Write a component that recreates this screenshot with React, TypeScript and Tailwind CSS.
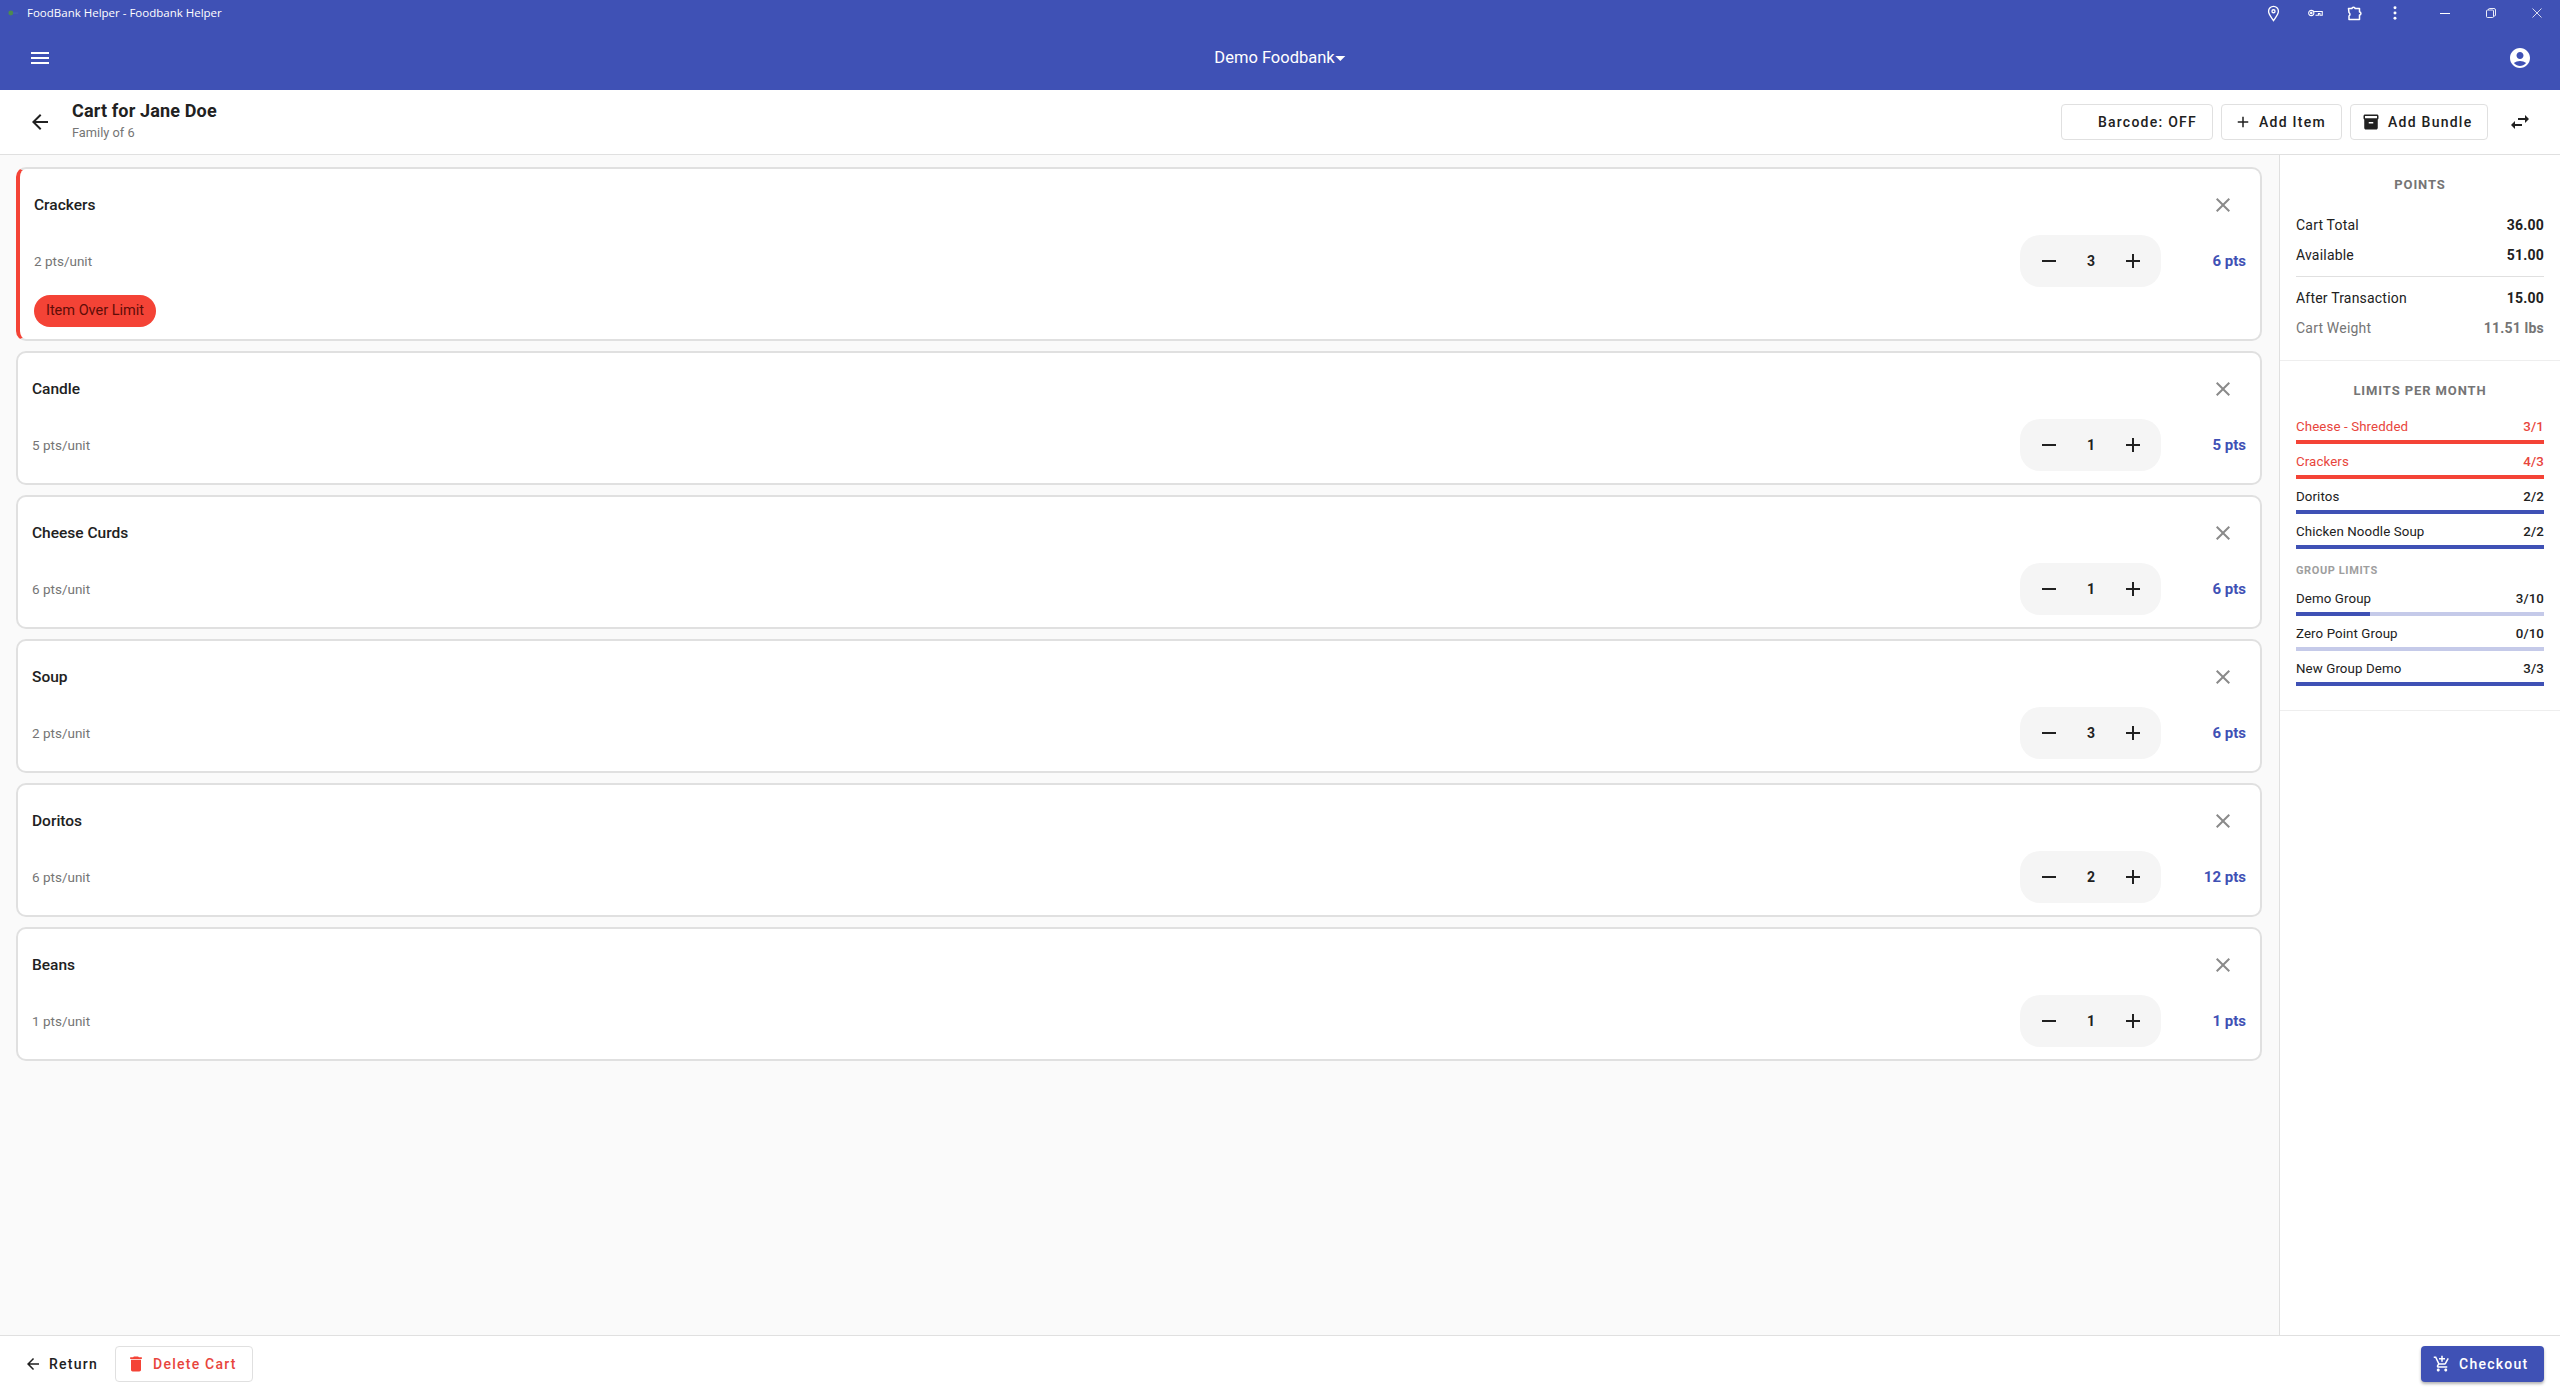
import type { ReactNode } from "react";

interface CartItem {
  name: string;
  perUnit: number;
  qty: number;
  pts: number;
  over?: boolean;
}

interface Limit {
  name: string;
  used: number;
  max: number;
}

const items: CartItem[] = [
  { name: "Crackers", perUnit: 2, qty: 3, pts: 6, over: true },
  { name: "Candle", perUnit: 5, qty: 1, pts: 5 },
  { name: "Cheese Curds", perUnit: 6, qty: 1, pts: 6 },
  { name: "Soup", perUnit: 2, qty: 3, pts: 6 },
  { name: "Doritos", perUnit: 6, qty: 2, pts: 12 },
  { name: "Beans", perUnit: 1, qty: 1, pts: 1 },
];

const itemLimits: Limit[] = [
  { name: "Cheese - Shredded", used: 3, max: 1 },
  { name: "Crackers", used: 4, max: 3 },
  { name: "Doritos", used: 2, max: 2 },
  { name: "Chicken Noodle Soup", used: 2, max: 2 },
];

const groupLimits: Limit[] = [
  { name: "Demo Group", used: 3, max: 10 },
  { name: "Zero Point Group", used: 0, max: 10 },
  { name: "New Group Demo", used: 3, max: 3 },
];

const paths = {
  menu: "M3 18h18v-2H3v2zm0-5h18v-2H3v2zm0-7v2h18V6H3z",
  back: "M20 11H7.83l5.59-5.59L12 4l-8 8 8 8 1.41-1.41L7.83 13H20v-2z",
  close: "M19 6.41 17.59 5 12 10.59 6.41 5 5 6.41 10.59 12 5 17.59 6.41 19 12 13.41 17.59 19 19 17.59 13.41 12z",
  add: "M19 13h-6v6h-2v-6H5v-2h6V5h2v6h6v2z",
  remove: "M19 13H5v-2h14v2z",
  bundle: "M20 2H4c-1 0-2 .9-2 2v3.01c0 .72.43 1.34 1 1.69V20c0 1.1 1.1 2 2 2h14c.9 0 2-.9 2-2V8.7c.57-.35 1-.97 1-1.69V4c0-1.1-1-2-2-2zm-5 12H9v-2h6v2zm5-7H4V4l16-.02V7z",
  swap: "M6.99 11 3 15l3.99 4v-3H14v-2H6.99v-3zM21 9l-3.99-4v3H10v2h7.01v3L21 9z",
  account: "M12 2C6.48 2 2 6.48 2 12s4.48 10 10 10 10-4.48 10-10S17.52 2 12 2zm0 4c1.93 0 3.5 1.57 3.5 3.5S13.93 13 12 13s-3.5-1.57-3.5-3.5S10.07 6 12 6zm0 14c-2.03 0-4.43-.82-6.14-2.88C7.55 15.8 9.68 15 12 15s4.45.8 6.14 2.12C16.43 19.18 14.03 20 12 20z",
  trash: "M6 19c0 1.1.9 2 2 2h8c1.1 0 2-.9 2-2V7H6v12zM19 4h-3.5l-1-1h-5l-1 1H5v2h14V4z",
  cart: "M11 9h2V6h3V4h-3V1h-2v3H8v2h3v3zm-4 9c-1.1 0-1.99.9-1.99 2S5.9 22 7 22s2-.9 2-2-.9-2-2-2zm10 0c-1.1 0-1.99.9-1.99 2s.89 2 1.99 2 2-.9 2-2-.9-2-2-2zm-9.83-3.25.03-.12.9-1.63h7.45c.75 0 1.41-.41 1.75-1.03l3.86-7.01L19.42 4h-.01l-1.1 2-2.76 5H8.53l-.13-.27L6.16 6l-.95-2-.94-2H1v2h2l3.6 7.59-1.35 2.45c-.16.28-.25.61-.25.96 0 1.1.9 2 2 2h12v-2H7.42c-.13 0-.25-.11-.25-.25z",
};

function Icon({ d, className }: { d: string; className: string }) {
  return (
    <svg viewBox="0 0 24 24" fill="currentColor" className={className}>
      <path d={d} />
    </svg>
  );
}

function TitleBar() {
  return (
    <div className="flex h-[26px] items-center text-white">
      <svg viewBox="0 0 16 16" className="ml-[6px] h-[14px] w-[14px]">
        <circle cx="5.500" cy="8" r="2.800" fill="#4d8a50" />
        <path d="M8 7.500h6v1.200H8z" fill="#4a63b8" />
      </svg>
      <span className="ml-[7px] text-[11.5px] [font-family:'Open_Sans',sans-serif]">FoodBank Helper - Foodbank Helper</span>
      <div className="ml-auto flex items-center">
        <svg viewBox="0 0 14 19" fill="none" stroke="currentColor" strokeWidth="1.5" className="mr-[28px] h-[17px] w-[13px]">
          <path d="M7 17.500C4 13 1.500 10.300 1.500 7a5.500 5.500 0 0 1 11 0c0 3.300-2.500 6-5.500 10.500z" />
          <circle cx="7" cy="7" r="1.700" />
        </svg>
        <svg viewBox="0 0 16 8" fill="none" stroke="currentColor" strokeWidth="1.1" className="mr-[24px] h-[8px] w-[15px]">
          <circle cx="3.5" cy="4" r="2.8" />
          <path d="M6.5 2.3h8.7v4h-2.5V4.6h-1.6v1.7H8" />
          <circle cx="3.5" cy="4" r="0.8" fill="currentColor" />
        </svg>
        <svg viewBox="0 0 16 15" fill="none" stroke="currentColor" strokeWidth="1.500" className="mr-[30px] h-[15px] w-[16px]">
          <path d="M1.500 2.500H5c0-1.800 3-1.800 3 0h4.500V6c1.900 0 1.900 3 0 3v4.500H2V10c1.300-.6 1.300-2.800 0-3.400z" strokeLinejoin="round" />
        </svg>
        <svg viewBox="0 0 4 16" fill="currentColor" className="mr-[43px] h-[14px] w-[4px]">
          <circle cx="2" cy="2" r="1.7" />
          <circle cx="2" cy="8" r="1.7" />
          <circle cx="2" cy="14" r="1.7" />
        </svg>
        <div className="mr-[36px] h-px w-[10px] bg-white" />
        <svg viewBox="0 0 10 10" fill="none" stroke="currentColor" strokeWidth="0.9" className="mr-[36px] h-[10px] w-[10px]">
          <rect x="0.5" y="2" width="7" height="7.500" rx="1" />
          <path d="M2.500 2V1.500a1 1 0 0 1 1-1h4.500a1.500 1.500 0 0 1 1.500 1.500v5a1 1 0 0 1-1 1H7.500" />
        </svg>
        <svg viewBox="0 0 10 10" fill="none" stroke="currentColor" strokeWidth="0.8" className="mr-[18px] h-[10px] w-[10px]">
          <path d="M0.500 0.500 9.500 9.500M9.500 0.500 0.500 9.500" />
        </svg>
      </div>
    </div>
  );
}

function OutlineButton({ children, className }: { children: ReactNode; className: string }) {
  return (
    <button className={`flex h-[36px] items-center rounded-[4px] border border-[#e0e0e0] bg-white text-[14px] font-medium tracking-[1.25px] ${className}`}>
      {children}
    </button>
  );
}

function CartCard({ item }: { item: CartItem }) {
  return (
    <div
      className={`flex flex-col rounded-[10px] border-2 border-[#e0e0e0] bg-white pr-[14px] ${
        item.over ? "h-[174px] border-l-4 border-l-[#f44336] pl-[14px]" : "h-[134px] pl-[14px]"
      }`}
    >
      <div className="mt-[12px] flex h-12 items-center justify-between">
        <span className="pt-[2px] text-[15.5px] font-medium text-[#212121]">{item.name}</span>
        <Icon d={paths.close} className="mr-[11px] h-[24px] w-[24px] text-[#8a8a8a]" />
      </div>
      <div className="mt-[6px] flex h-[52px] items-center">
        <span className="text-[13.5px] text-[#757575]">{item.perUnit} pts/unit</span>
        <div className="ml-auto flex h-[52px] w-[141px] items-center justify-between rounded-[20px] bg-[#f5f5f5] pr-[16px] pl-[17px]">
          <Icon d={paths.remove} className="h-[24px] w-[24px] text-[#212121]" />
          <span className="text-[14px] font-bold text-[#212121]">{item.qty}</span>
          <Icon d={paths.add} className="h-[24px] w-[24px] text-[#212121]" />
        </div>
        <span className="w-[85px] text-right text-[15px] font-bold text-[#3f51b5]">{item.pts} pts</span>
      </div>
      {item.over && (
        <div className="mt-[8px] flex h-[32px] w-[122px] items-center justify-center rounded-full bg-[#f44336] text-[14.5px] text-[#5f0d08]">
          Item Over Limit
        </div>
      )}
    </div>
  );
}

function SummaryRow({ label, value, muted }: { label: string; value: string; muted?: boolean }) {
  return (
    <div className={`flex h-[30px] items-center justify-between text-[14px] tracking-[0.2px] ${muted ? "text-[#757575]" : "text-[#212121]"}`}>
      <span>{label}</span>
      <span className="font-bold">{value}</span>
    </div>
  );
}

function LimitRow({ limit }: { limit: Limit }) {
  const over = limit.used > limit.max;
  const pct = Math.min(100, (limit.used / limit.max) * 100);
  return (
    <div className="h-[35px]">
      <div className={`flex h-[17px] items-center justify-between text-[13.3px] tracking-[0.1px] ${over ? "text-[#e8453c]" : "text-[#212121]"}`}>
        <span>{limit.name}</span>
        <span className="font-medium">
          {limit.used}/{limit.max}
        </span>
      </div>
      <div className={`mt-[5px] h-1 ${over ? "bg-[#f5b5b0]" : "bg-[#c5cae9]"}`}>
        <div className={`h-full ${over ? "bg-[#f44336]" : "bg-[#3f51b5]"}`} style={{ width: `${pct}%` }} />
      </div>
    </div>
  );
}

export default function App() {
  return (
    <div className="flex h-screen flex-col overflow-hidden bg-[#fafafa] [font-family:Roboto,sans-serif]">
      <header className="h-[90px] shrink-0 bg-[#3f51b5]">
        <TitleBar />
        <div className="relative flex h-[64px] items-center justify-between px-[28px] text-white">
          <Icon d={paths.menu} className="h-[24px] w-[24px]" />
          <div className="absolute left-1/2 flex -translate-x-1/2 items-center text-[16.5px]">
            Demo Foodbank
            <span className="ml-[1px] h-0 w-0 border-x-[5px] border-t-[5px] border-x-transparent border-t-white" />
          </div>
          <Icon d={paths.account} className="h-[24px] w-[24px]" />
        </div>
      </header>

      <div className="flex h-[65px] shrink-0 items-center border-b border-[#e0e0e0] bg-white pr-[28px]">
        <Icon d={paths.back} className="ml-[28px] h-[24px] w-[24px] text-[#212121]" />
        <div className="ml-[20px] pb-[4px]">
          <div className="text-[18px] leading-[24px] font-bold tracking-[0.15px] text-[#212121]">Cart for Jane Doe</div>
          <div className="mt-[2px] text-[12.8px] leading-[16px] text-[#757575]">Family of 6</div>
        </div>
        <div className="ml-auto flex items-center gap-[8px] text-[#212121]">
          <OutlineButton className="w-[152px] justify-end pr-[15px]">Barcode: OFF</OutlineButton>
          <OutlineButton className="w-[121px] pl-[12px]">
            <Icon d={paths.add} className="mr-[7px] h-[18px] w-[18px]" />
            Add Item
          </OutlineButton>
          <OutlineButton className="w-[138px] pl-[11px]">
            <Icon d={paths.bundle} className="mr-[8px] h-[18px] w-[18px]" />
            Add Bundle
          </OutlineButton>
        </div>
        <Icon d={paths.swap} className="ml-[20px] h-[24px] w-[24px] text-[#212121]" />
      </div>

      <div className="flex min-h-0 flex-1">
        <main className="flex flex-1 flex-col gap-[10px] pt-[12px] pr-[17px] pl-4">
          {items.map((item) => (
            <CartCard key={item.name} item={item} />
          ))}
        </main>
        <aside className="w-[281px] shrink-0 border-l border-[#e0e0e0] bg-white">
          <section className="h-[206px] border-b border-[#eeeeee] px-4 pt-[19px]">
            <h2 className="mb-[14px] text-center text-[13px] leading-[22px] font-bold tracking-[0.9px] text-[#757575]">POINTS</h2>
            <SummaryRow label="Cart Total" value="36.00" />
            <SummaryRow label="Available" value="51.00" />
            <div className="my-[6px] h-px bg-[#e0e0e0]" />
            <SummaryRow label="After Transaction" value="15.00" />
            <SummaryRow label="Cart Weight" value="11.51 lbs" muted />
          </section>
          <section className="h-[350px] border-b border-[#eeeeee] px-4 pt-[19px]">
            <h2 className="mb-[16px] text-center text-[13px] leading-[22px] font-bold tracking-[0.9px] text-[#757575]">LIMITS PER MONTH</h2>
            {itemLimits.map((limit) => (
              <LimitRow key={limit.name} limit={limit} />
            ))}
            <h3 className="mt-[5px] mb-[11px] text-[11px] leading-[16px] font-bold tracking-[0.6px] text-[#9e9e9e]">GROUP LIMITS</h3>
            {groupLimits.map((limit) => (
              <LimitRow key={limit.name} limit={limit} />
            ))}
          </section>
        </aside>
      </div>

      <footer className="flex h-[57px] shrink-0 items-center border-t border-[#e0e0e0] bg-white pr-4">
        <button className="ml-[24px] flex items-center text-[14px] font-medium tracking-[1.25px] text-[#212121]">
          <Icon d={paths.back} className="mr-[7px] h-[18px] w-[18px]" />
          Return
        </button>
        <OutlineButton className="ml-[17px] w-[138px] pl-[10px] text-[#e8453c]">
          <Icon d={paths.trash} className="mr-[7px] h-[20px] w-[20px] text-[#f44336]" />
          Delete Cart
        </OutlineButton>
        <button className="ml-auto flex h-[36px] w-[123px] items-center rounded-[4px] bg-[#3f51b5] pl-[12px] text-[14px] font-medium tracking-[1.25px] text-white shadow-[0_2px_3px_rgba(0,0,0,0.3)]">
          <Icon d={paths.cart} className="mr-[8px] h-[18px] w-[18px]" />
          Checkout
        </button>
      </footer>
    </div>
  );
}
